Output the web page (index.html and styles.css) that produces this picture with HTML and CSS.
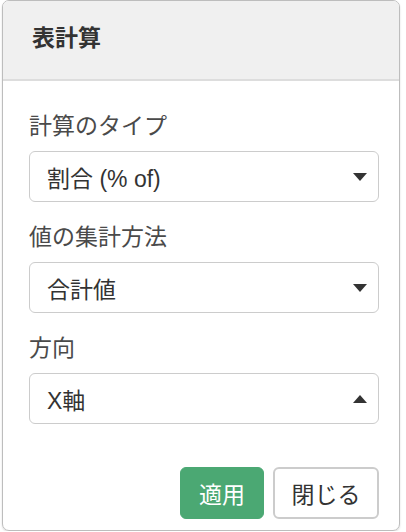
FILE: index.html
```html
<!DOCTYPE html>
<html lang="ja">
<head>
<meta charset="utf-8">
<title>表計算</title>
<link rel="stylesheet" href="styles.css">
</head>
<body>
<div class="panel">
  <div class="panel-header">
    <h3 class="panel-title">表計算</h3>
  </div>
  <div class="panel-body">
    <div class="field">
      <div class="field-label">計算のタイプ</div>
      <div class="select">
        <span class="select-value">割合 (% of)</span>
        <span class="caret caret-down"></span>
      </div>
    </div>
    <div class="field">
      <div class="field-label">値の集計方法</div>
      <div class="select">
        <span class="select-value">合計値</span>
        <span class="caret caret-down"></span>
      </div>
    </div>
    <div class="field">
      <div class="field-label">方向</div>
      <div class="select">
        <span class="select-value">X軸</span>
        <span class="caret caret-up"></span>
      </div>
    </div>
    <div class="actions">
      <button class="btn btn-primary">適用</button>
      <button class="btn btn-default">閉じる</button>
    </div>
  </div>
</div>
</body>
</html>
```

FILE: styles.css
```css
html, body {
  margin: 0;
  padding: 0;
  background: #ffffff;
}

body {
  font-family: "Liberation Sans", "Noto Sans CJK JP", sans-serif;
  color: #333333;
  font-size: 23px;
}

.panel {
  box-sizing: border-box;
  margin-left: 2px;
  width: 398px;
  height: 531px;
  border: 1px solid #bdbdbd;
  border-radius: 7px;
  box-shadow: 0 1px 2px rgba(0, 0, 0, 0.15);
  overflow: hidden;
  display: flex;
  flex-direction: column;
}

.panel-header {
  box-sizing: border-box;
  height: 80px;
  background: #f0f0f0;
  border-bottom: 2px solid #dddddd;
  padding: 0 0 0 29px;
  display: flex;
  align-items: center;
}

.panel-title {
  margin: 0;
  font-size: 23px;
  font-weight: bold;
  color: #333333;
  line-height: 1;
  position: relative;
  top: -2px;
}

.panel-body {
  flex: 1;
  padding: 30px 20px 0 26px;
  display: flex;
  flex-direction: column;
}

.field {
  margin-bottom: 20px;
}

.field-label {
  color: #4a4a4a;
  line-height: 30px;
  margin-bottom: 10px;
}

.select {
  box-sizing: border-box;
  height: 51px;
  border: 1px solid #cccccc;
  border-radius: 6px;
  padding: 0 11px 0 17px;
  display: flex;
  align-items: center;
  justify-content: space-between;
  background: #ffffff;
  color: #333333;
}

.caret {
  width: 0;
  height: 0;
  border-left: 7px solid transparent;
  border-right: 7px solid transparent;
}

.caret-down {
  border-top: 8px solid #333333;
}

.caret-up {
  border-bottom: 8px solid #333333;
}

.actions {
  margin-top: 23px;
  display: flex;
  justify-content: flex-end;
  gap: 9px;
}

.btn {
  box-sizing: border-box;
  height: 52px;
  font-family: inherit;
  font-size: 23px;
  border-radius: 6px;
  padding: 0;
  white-space: nowrap;
  text-align: center;
  cursor: pointer;
}

.btn-primary {
  background: #4ba873;
  border: 1px solid #4ba873;
  color: #ffffff;
  width: 84px;
}

.btn-default {
  background: #ffffff;
  border: 2px solid #cccccc;
  color: #333333;
  width: 106px;
}
```
